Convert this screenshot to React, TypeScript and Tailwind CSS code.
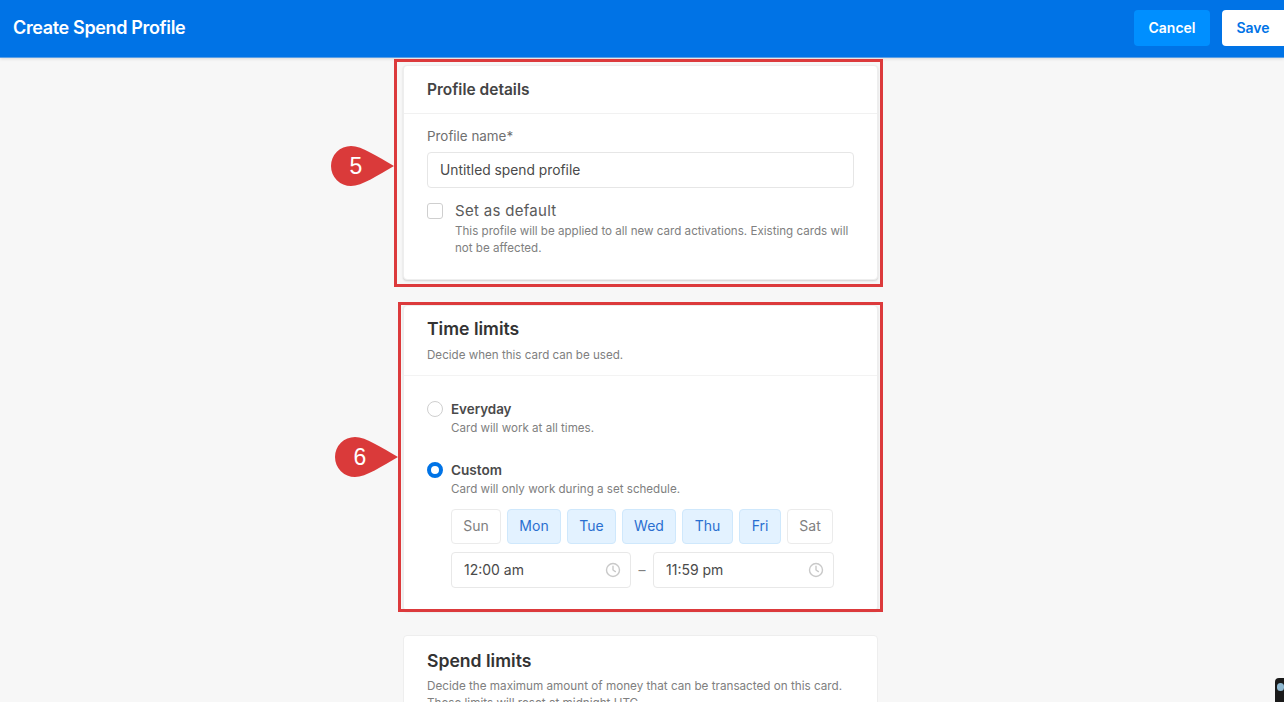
import React from 'react';

const days = [
  { label: 'Sun', on: false, width: 'w-[50px]' },
  { label: 'Mon', on: true, width: 'w-[54px]' },
  { label: 'Tue', on: true, width: 'w-[49px]' },
  { label: 'Wed', on: true, width: 'w-[54px]' },
  { label: 'Thu', on: true, width: 'w-[51px]' },
  { label: 'Fri', on: true, width: 'w-[42px]' },
  { label: 'Sat', on: false, width: 'w-[46px]' },
];

const Clock = () => (
  <svg width="16" height="16" viewBox="0 0 16 16" fill="none" stroke="#c9c9c9" strokeWidth="1.4" strokeLinecap="round" strokeLinejoin="round">
    <circle cx="8" cy="8" r="6.5" />
    <path d="M8 4.2V8l2.4 1.6" />
  </svg>
);

const Pin = ({ n, className }: { n: number; className: string }) => (
  <div className={`absolute w-[63px] h-[40px] ${className}`}>
    <svg width="63" height="40" viewBox="0 0 63 40" className="absolute inset-0">
      <path d="M20 0C31 0 47 11 63 20C47 29 31 40 20 40A20 20 0 0 1 20 0Z" fill="#da3a3a" />
    </svg>
    <span className="absolute left-[15px] top-[7px] w-[20px] text-center text-white text-[23px] leading-[26px] font-['Liberation_Sans',sans-serif]">{n}</span>
  </div>
);

const TimeField = ({ value, width }: { value: string; width: string }) => (
  <div className={`${width} h-9 bg-white border border-[#e8e8e8] rounded flex items-center justify-between pl-3 pr-[9px] text-sm text-[#4a4a4a]`}>
    <span>{value}</span>
    <Clock />
  </div>
);

const Radio = ({ checked }: { checked: boolean }) =>
  checked ? (
    <span className="w-4 h-4 rounded-full border-[4px] border-[#0073e6] bg-white shrink-0" />
  ) : (
    <span className="w-4 h-4 rounded-full border border-[#cfcfcf] bg-white shrink-0" />
  );

export default function App() {
  return (
    <div className="relative w-[1284px] h-[702px] overflow-hidden bg-[#f7f7f7] font-['Inter',sans-serif]">
      <header className="h-[58px] bg-[#0073e6] border-b border-[#5a9fe6] shadow-[0_1px_3px_rgba(0,0,0,0.12)] flex items-center justify-between pl-[13px]">
        <h1 className="-mt-[2px] text-lg font-semibold text-white tracking-[-0.35px]">Create Spend Profile</h1>
        <div className="flex items-center gap-3 -mt-[1px]">
          <button className="w-[76px] h-9 rounded bg-[#008fff] text-white text-sm font-semibold">Cancel</button>
          <button className="w-[62px] h-9 rounded-l bg-white text-[#0073e6] text-sm font-semibold">Save</button>
        </div>
      </header>

      <main className="pl-[403px] pt-[7px]">
        <div className="w-[475px] flex flex-col">
          <section className="h-[215px] bg-white rounded border border-[#eeeeee] shadow-[0_1px_2px_rgba(0,0,0,0.15)]">
            <div className="h-[48px] px-[23px] flex items-center border-b border-[#f1f1f1]">
              <h2 className="text-[15.5px] font-semibold text-[#444444]">Profile details</h2>
            </div>
            <div className="px-[23px] pt-[12px]">
              <label className="block text-[13.4px] leading-5 text-[#6f6f6f]">Profile name*</label>
              <div className="mt-[6px] h-9 w-[427px] bg-white border border-[#e6e6e6] rounded flex items-center px-3 text-[13.8px] text-[#4a4a4a]">
                Untitled spend profile
              </div>
              <div className="mt-[15px] flex gap-3">
                <span className="w-4 h-4 rounded-[3px] border border-[#cfcfcf] bg-white shrink-0" />
                <div>
                  <div className="text-[15px] leading-4 tracking-[0.3px] text-[#5a5a5a]">Set as default</div>
                  <p className="mt-[4px] w-[400px] text-[11.6px] leading-[17px] text-[#808080]">
                    This profile will be applied to all new card activations. Existing cards will not be affected.
                  </p>
                </div>
              </div>
            </div>
          </section>

          <section className="mt-[25px] h-[306px] bg-white rounded border border-[#eeeeee] shadow-[0_1px_2px_rgba(0,0,0,0.12)]">
            <div className="h-[70px] px-[23px] pt-[11px] border-b border-[#f3f3f3]">
              <h2 className="text-[17.6px] leading-6 font-semibold text-[#333333]">Time limits</h2>
              <p className="mt-[6px] text-[11.6px] leading-4 text-[#808080]">Decide when this card can be used.</p>
            </div>
            <div className="px-[23px] pt-[25px]">
              <div className="flex items-center gap-2 h-4">
                <Radio checked={false} />
                <span className="text-[13.4px] font-semibold text-[#4a4a4a]">Everyday</span>
              </div>
              <p className="ml-6 mt-[3px] text-[11.6px] leading-4 text-[#808080]">Card will work at all times.</p>
              <div className="mt-[26px] flex items-center gap-2 h-4">
                <Radio checked />
                <span className="text-[13.6px] font-semibold text-[#4a4a4a]">Custom</span>
              </div>
              <p className="ml-6 mt-[3px] text-[11.6px] leading-4 text-[#808080]">Card will only work during a set schedule.</p>
              <div className="ml-6 mt-[12px] flex gap-[6px]">
                {days.map((d) => (
                  <div
                    key={d.label}
                    className={`${d.width} h-[35px] pb-[1px] rounded border flex items-center justify-center text-sm ${
                      d.on ? 'bg-[#e3f2ff] border-[#cfe8fc] text-[#2a6fd0]' : 'bg-white border-[#ebebeb] text-[#808080]'
                    }`}
                  >
                    {d.label}
                  </div>
                ))}
              </div>
              <div className="ml-6 mt-2 flex items-center">
                <TimeField value="12:00 am" width="w-[180px]" />
                <span className="w-[22px] text-center text-sm text-[#808080]">–</span>
                <TimeField value="11:59 pm" width="w-[181px]" />
              </div>
            </div>
          </section>

          <section className="mt-[24px] h-[200px] bg-white rounded border border-[#eeeeee] px-[23px] pt-[13px]">
            <h2 className="text-[17.6px] leading-6 font-semibold text-[#333333]">Spend limits</h2>
            <p className="mt-[5px] w-[430px] text-[11.7px] leading-[17px] text-[#808080]">
              Decide the maximum amount of money that can be transacted on this card. These limits will reset at midnight UTC.
            </p>
          </section>
        </div>
      </main>

      {/* annotations on top of the screenshot */}
      <div className="absolute left-[394px] top-[59px] w-[489px] h-[228px] border-[3px] border-[#dc3a3c]" />
      <div className="absolute left-[398px] top-[302px] w-[485px] h-[310px] border-[3px] border-[#dc3a3c]" />
      <Pin n={5} className="left-[331px] top-[146px]" />
      <Pin n={6} className="left-[335px] top-[437px]" />

      <div className="absolute left-[1275px] top-[678px] w-[12px] h-[28px] rounded-tl-[4px] bg-[#1a1a1a]">
        <span className="absolute left-[2px] top-[5px] w-[7px] h-[8px] rounded-full bg-[#8fb8d0]" />
      </div>
    </div>
  );
}
